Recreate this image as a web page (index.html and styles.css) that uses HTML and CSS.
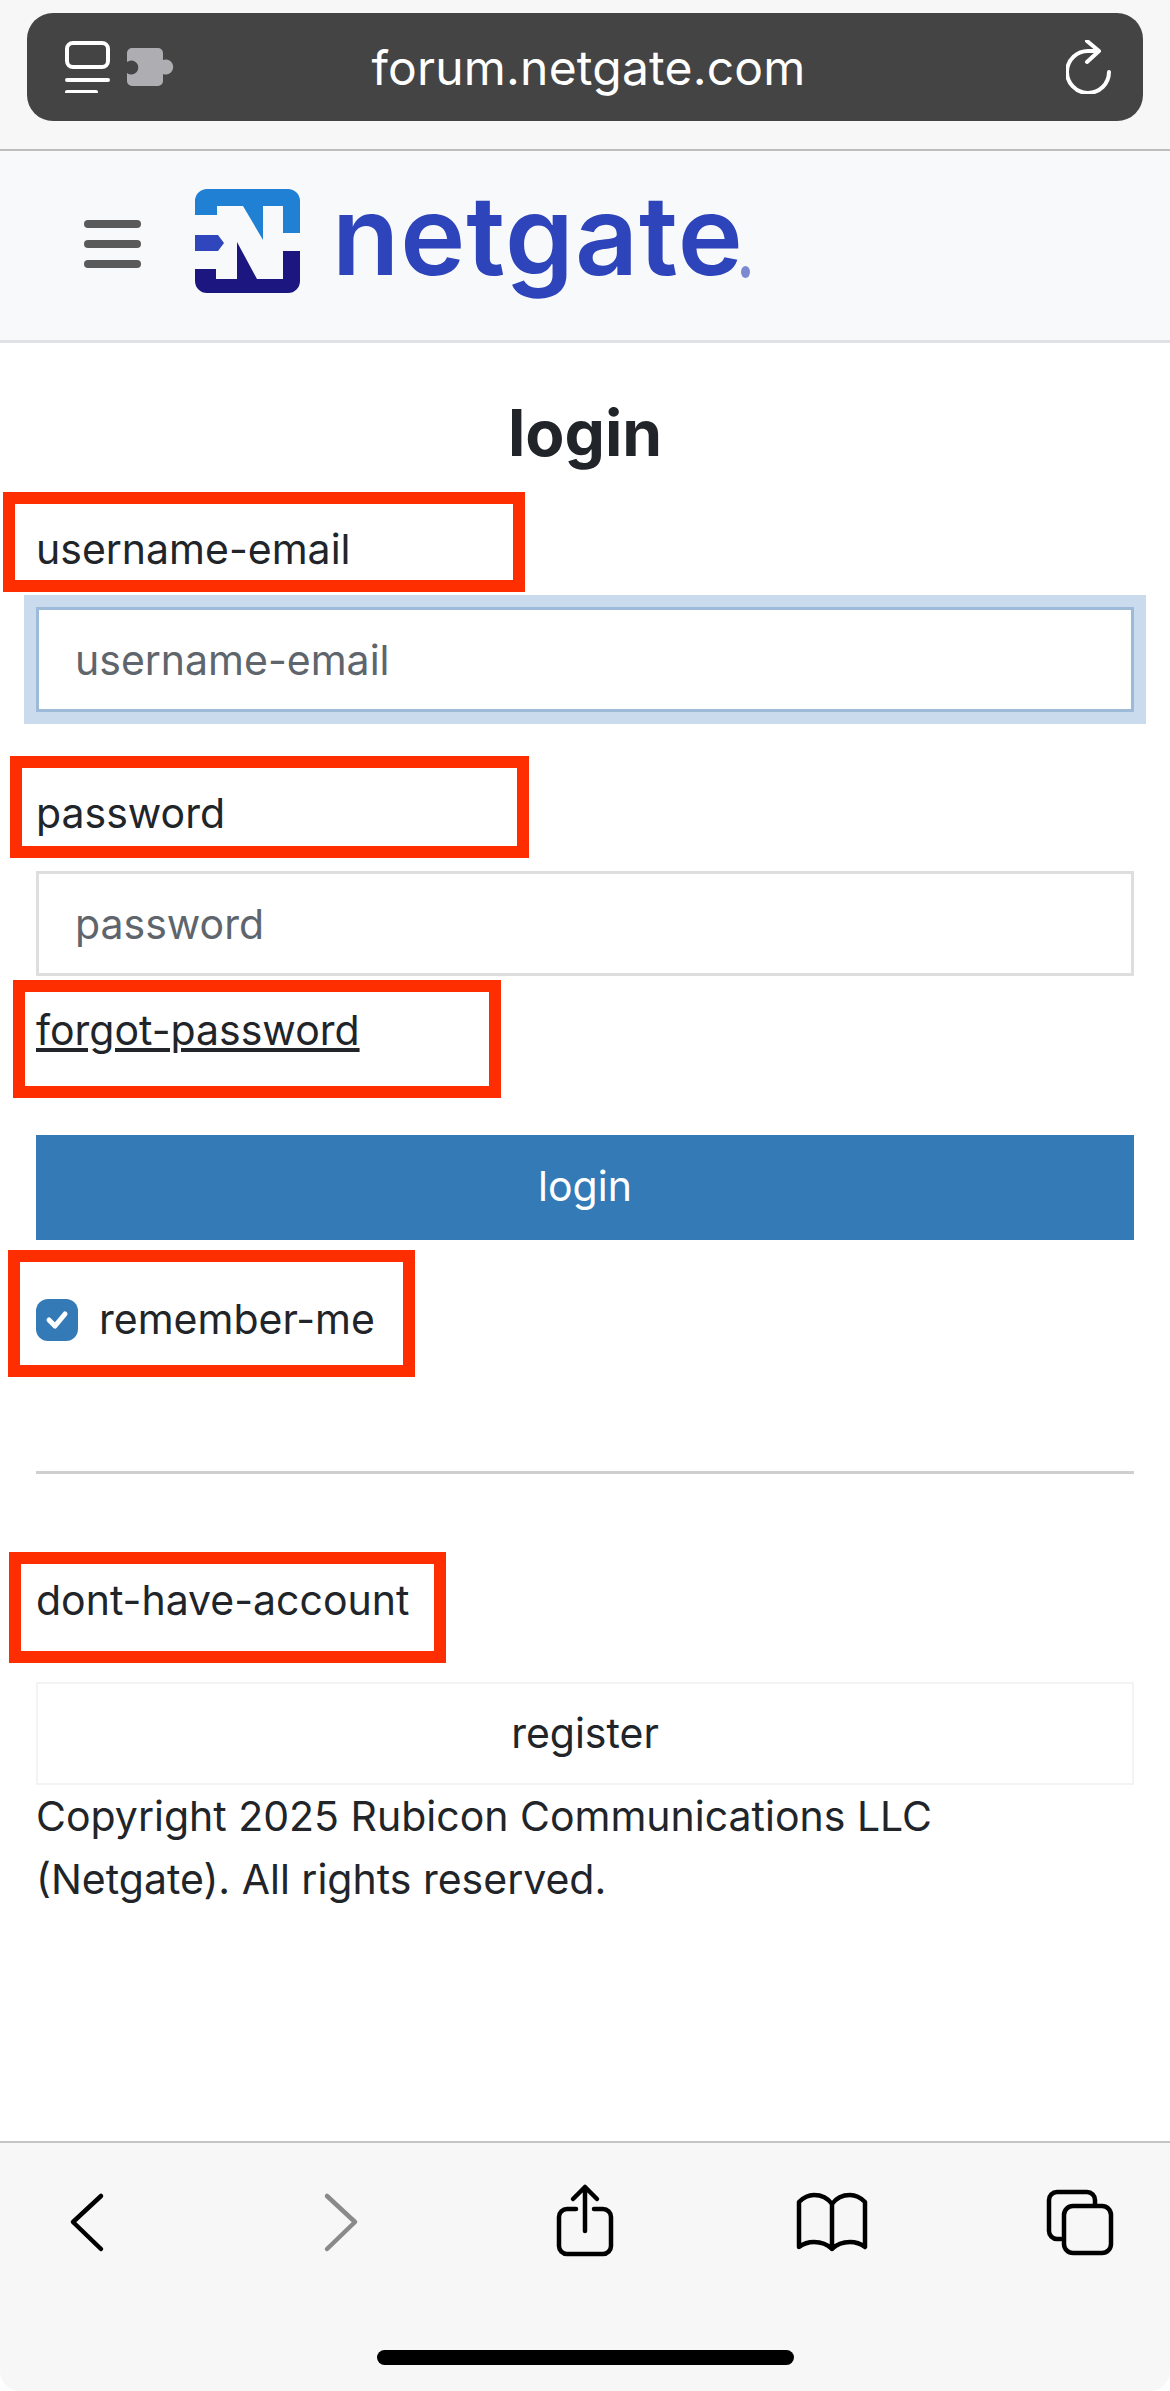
FILE: index.html
```html
<!DOCTYPE html>
<html lang="en">
<head>
    <meta charset="UTF-8">
    <title>login - forum.netgate.com</title>
    <link rel="stylesheet" href="styles.css">
</head>
<body>
    <div class="page">
        <div class="topbar">
            <div class="address">
                <div class="address-left">
                    <svg class="reader" width="45" height="52" viewBox="0 0 45 52" fill="none" stroke="#fff" stroke-width="4" stroke-linecap="round">
                        <rect x="2" y="2" width="41" height="24" rx="6"/>
                        <path d="M2 39H43M2 51H31"/>
                    </svg>
                    <svg class="puzzle" width="47" height="38" viewBox="0 0 47 38" fill="#aeaeb2">
                        <path d="M5 0H31a5 5 0 0 1 5 5V12a7.5 7.5 0 1 1 0 14V33a5 5 0 0 1 -5 5H5a5 5 0 0 1 -5-5V25a7 7 0 1 0 0-11V5a5 5 0 0 1 5-5Z"/>
                    </svg>
                </div>
                <div class="url">forum.netgate.com</div>
                <div class="address-right">
                    <svg width="46" height="54" viewBox="0 0 46 54" fill="none" stroke="#fff" stroke-width="4" stroke-linecap="round" stroke-linejoin="round">
                        <path d="M43 32A21 21 0 1 1 23 11H32"/>
                        <path d="M21 1L33 11L21 22"/>
                    </svg>
                </div>
            </div>
        </div>

        <header class="navbar">
            <div class="burger"><span></span><span></span><span></span></div>
            <svg class="mark" width="116" height="116" viewBox="0 0 116 116">
                <path fill="#1f80d4" d="M5 32V18A12 12 0 0 1 17 6H98A12 12 0 0 1 110 18V50H93V23H73V57L53 23H27V32Z"/>
                <path fill="#2f46bd" d="M5 52H28L34 60L28 68H5Z"/>
                <path fill="#1c1680" d="M5 86H26V96H47V59L67 96H93V68H110V98A12 12 0 0 1 98 110H17A12 12 0 0 1 5 98Z"/>
            </svg>
            <span class="brand">netgate</span>
            <span class="brand-dot"></span>
        </header>

        <main class="content">
            <h1>login</h1>
            <label class="field-label">username-email</label>
            <input class="field field-focus" type="text" placeholder="username-email">
            <label class="field-label label-second">password</label>
            <input class="field" type="password" placeholder="password">
            <a class="forgot" href="#">forgot-password</a>
            <button class="btn-login">login</button>
            <div class="remember">
                <span class="check">
                    <svg width="24" height="20" viewBox="0 0 24 20" fill="none" stroke="#fff" stroke-width="5" stroke-linecap="round" stroke-linejoin="round"><path d="M4 10L10 16L20 4"/></svg>
                </span>
                <span>remember-me</span>
            </div>
            <hr class="divider">
            <div class="no-account">dont-have-account</div>
            <button class="btn-register">register</button>
            <p class="copyright">Copyright 2025 Rubicon Communications LLC<br>(Netgate). All rights reserved.</p>
        </main>

        <footer class="toolbar">
            <div class="toolbar-icons">
                <svg width="100" height="100" viewBox="0 0 100 100" fill="none" stroke="#000" stroke-width="4.5" stroke-linecap="round" stroke-linejoin="round"><path d="M65 21L37 47L65 74"/></svg>
                <svg width="100" height="100" viewBox="0 0 100 100" fill="none" stroke="#8a8a8a" stroke-width="4.5" stroke-linecap="round" stroke-linejoin="round"><path d="M37 21L65 47L37 74"/></svg>
                <svg width="100" height="100" viewBox="0 0 100 100" fill="none" stroke="#000" stroke-width="4.5" stroke-linecap="round" stroke-linejoin="round"><path d="M41 34H32A8 8 0 0 0 24 42V71A8 8 0 0 0 32 79H68A8 8 0 0 0 76 71V42A8 8 0 0 0 68 34H59"/><path d="M50 12V56M38 24L50 12L62 24"/></svg>
                <svg width="100" height="100" viewBox="0 0 100 100" fill="none" stroke="#000" stroke-width="4.5" stroke-linecap="round" stroke-linejoin="round"><path d="M50 29C45 22 38 20 32 20C26 20 21 23 17 27V72C21 69 26 67 32 67C38 67 45 69 50 74C55 69 62 67 68 67C74 67 79 69 83 72V27C79 23 74 20 68 20C62 20 55 22 50 29V74"/></svg>
                <svg width="100" height="100" viewBox="0 0 100 100" fill="none" stroke="#000" stroke-width="4.5" stroke-linecap="round" stroke-linejoin="round"><rect x="34" y="31" width="47" height="47" rx="9"/><path d="M31 64H27A8 8 0 0 1 19 56V25A8 8 0 0 1 27 17H57A8 8 0 0 1 65 25V30"/></svg>
            </div>
            <div class="home-bar"></div>
        </footer>

        <!-- red boxes drawn on top of the screenshot -->
        <div class="mark-box box-user"></div>
        <div class="mark-box box-pass"></div>
        <div class="mark-box box-forgot"></div>
        <div class="mark-box box-remember"></div>
        <div class="mark-box box-account"></div>
    </div>
</body>
</html>
```

FILE: styles.css
```css
* { box-sizing: border-box; }
html, body { margin: 0; padding: 0; background: #fff; }
body { font-family: "Inter", "Liberation Sans", sans-serif; font-size: 41px; line-height: 63px; color: #212529; }
.page { position: relative; width: 1170px; height: 2391px; display: flex; flex-direction: column; overflow: hidden; }

.topbar { height: 151px; padding: 13px 27px 0; background: #f7f7f7; border-bottom: 2px solid #bdbdbd; }
.address { height: 108px; padding: 0 31px 0 38px; background: #444; border-radius: 26px; display: grid; grid-template-columns: 1fr auto 1fr; align-items: center; color: #fff; }
.address-left { display: flex; align-items: center; gap: 17px; }
.address-right { display: flex; justify-content: flex-end; }
.url { font-size: 48px; font-weight: 400; white-space: nowrap; letter-spacing: 0.2px; }

.navbar { height: 192px; padding-left: 84px; background: #f8f9fa; border-bottom: 3px solid #dee2e6; display: flex; align-items: center; }
.burger { width: 57px; display: flex; flex-direction: column; gap: 12px; margin: 0 49px 4px 0; }
.burger span { height: 8px; background: #5a5a5a; border-radius: 4px; }
.mark { margin: 0 26px 10px 0; }
.brand { font-size: 110px; line-height: 110px; font-weight: 600; color: #2e44bb; letter-spacing: 1px; margin-bottom: 22px; }
.brand-dot { width: 9px; height: 12px; margin: 52px 0 0 -3px; background: #7c8ad0; border-radius: 50%; }

.content { flex: 1; padding: 45px 36px 0; }
h1 { margin: 0 0 40px; font-size: 64px; line-height: 90px; font-weight: 700; text-align: center; }
.field-label { display: block; margin-bottom: 26px; }
.label-second { margin-top: 70px; }
.field { display: block; width: 100%; height: 105px; padding: 0 36px; background: #fff; border: 3px solid #dedede; border-radius: 0; font: inherit; color: #212529; outline: none; }
.field::placeholder { color: #5e656c; opacity: 1; }
.field-focus { border-color: #9dbbd8; box-shadow: 0 0 0 12px #c9dbec; }
.forgot { display: block; width: max-content; margin-top: 23px; color: #212529; text-decoration: underline; }
.btn-login { display: block; width: 100%; height: 105px; margin-top: 73px; padding-bottom: 3px; background: #337ab7; border: 0; color: #fff; font: inherit; }
.remember { display: flex; align-items: center; gap: 21px; height: 63px; margin-top: 48px; }
.check { width: 42px; height: 42px; background: #337ab7; border-radius: 12px; display: flex; align-items: center; justify-content: center; }
.divider { height: 3px; margin: 120px 0 0; background: #cfcfcf; border: 0; }
.no-account { margin-top: 95px; }
.btn-register { display: block; width: 100%; height: 103px; margin-top: 50px; background: #fff; border: 2px solid #f3f3f3; color: #212529; font: inherit; }
.copyright { margin: 0; }

.toolbar { position: relative; height: 250px; background: #f7f7f7; border-top: 2px solid #c4c4c4; border-radius: 0 0 20px 20px; }
.toolbar-icons { display: grid; grid-template-columns: 254px 245px 247px 248px 100px; padding: 32px 0 0 36px; }
.home-bar { width: 417px; height: 15px; margin: 75px auto 0; background: #000; border-radius: 8px; }

.mark-box { position: absolute; border: 12px solid #fe2e00; }
.box-user { left: 3px; top: 492px; width: 522px; height: 100px; }
.box-pass { left: 10px; top: 756px; width: 519px; height: 102px; }
.box-forgot { left: 13px; top: 980px; width: 488px; height: 118px; }
.box-remember { left: 8px; top: 1250px; width: 407px; height: 127px; }
.box-account { left: 9px; top: 1552px; width: 437px; height: 111px; }
```
